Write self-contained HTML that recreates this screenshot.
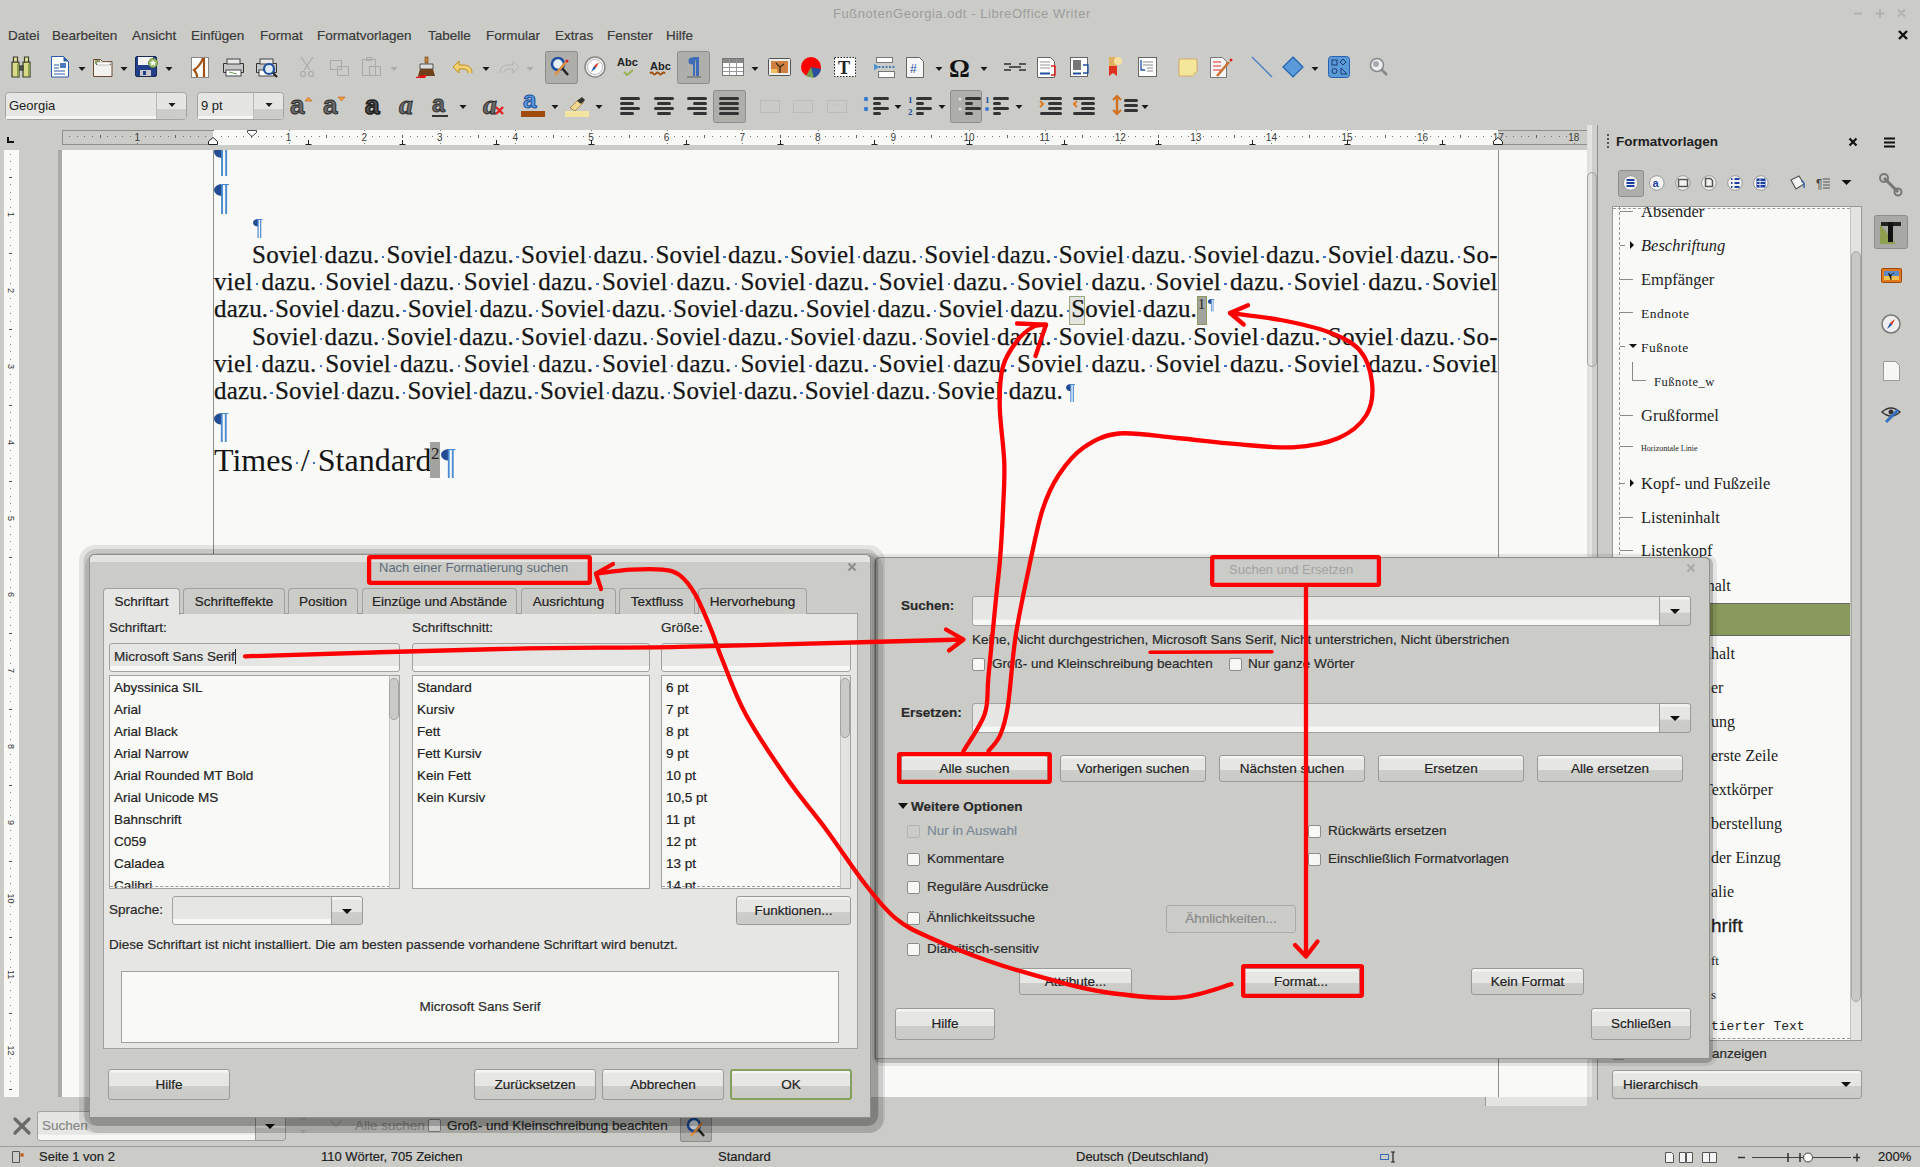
<!DOCTYPE html>
<html><head><meta charset="utf-8">
<style>
*{box-sizing:border-box;margin:0;padding:0}
html,body{width:1920px;height:1167px;overflow:hidden;background:#cbccc8;font-family:"Liberation Sans",sans-serif;font-size:13px;color:#2f2f2f;position:relative}
.a{position:absolute}
.t{position:absolute;white-space:nowrap;line-height:1}
.menu span{position:absolute;top:29px;font-size:13.5px;color:#3a3a3a;white-space:nowrap;line-height:1}
.ln{position:absolute;left:214px;width:1284px;text-align:justify;text-align-last:justify;font-family:"Liberation Serif",serif;font-size:25px;color:#151515;white-space:normal;line-height:27px;height:27px;letter-spacing:.3px;-webkit-text-stroke:.25px #151515}
.d{position:relative}.d:after{content:"";position:absolute;left:50%;top:55%;width:2.4px;height:2.4px;margin-left:-1.2px;background:#3a74c4}
.pil{color:#3b6db4;font-family:"Liberation Sans",sans-serif}
.dlg{position:absolute;background:#cbccc8;border:1px solid #8f908c;border-radius:6px 6px 0 0}
.btn{position:absolute;height:29px;border:1px solid #9a9b97;border-radius:3px;background:linear-gradient(#f4f5f2 0,#f4f5f2 2px,#e6e7e4 3px,#e6e7e4 55%,#cdcecA 56%,#cacbc7 100%);font-size:13.5px;color:#222;text-align:center;line-height:27px;white-space:nowrap}
.inp{position:absolute;border:1px solid #a2a39f;border-radius:3px;background:linear-gradient(#e5e6e3 0,#e6e7e4 80%,#f7f8f6 81%)}
.list{position:absolute;background:#f9faf8;border:1px solid #a2a39f;overflow:hidden}
.list div{position:absolute;left:4px;font-size:13.5px;color:#222;white-space:nowrap;line-height:1}
.cb{position:absolute;width:13px;height:13px;border:1px solid #8c8d89;border-radius:2px;background:#f7f8f6}
.lbl{position:absolute;font-size:13.5px;color:#2a2a2a;white-space:nowrap;line-height:1}
.tab{position:absolute;top:588px;height:26px;border:1px solid #a0a19d;border-bottom:none;border-radius:4px 4px 0 0;background:#cbccc8;font-size:13.5px;color:#222;text-align:center;line-height:26px;white-space:nowrap}
.sty{position:absolute;font-family:"Liberation Serif",serif;color:#222;white-space:nowrap;line-height:1}
.lbl,.btn,.list div,.tab,.menu span{-webkit-text-stroke:.2px currentColor}
</style></head><body>
<!-- chrome -->
<div class="t" style="left:833px;top:7px;font-size:13px;color:#9d9d9d;letter-spacing:.55px">FußnotenGeorgia.odt - LibreOffice Writer</div>
<svg class="a" style="left:1850px;top:6px" width="60" height="14"><path d="M4 7.5H12M30 3V12M25.5 7.5H34.5M48 3.5L55 10.5M55 3.5L48 10.5" stroke="#b2b2b0" stroke-width="2" fill="none"/></svg>
<div class="menu">
<span style="left:8px">Datei</span><span style="left:52px">Bearbeiten</span><span style="left:132px">Ansicht</span><span style="left:191px">Einfügen</span><span style="left:260px">Format</span><span style="left:317px">Formatvorlagen</span><span style="left:428px">Tabelle</span><span style="left:486px">Formular</span><span style="left:555px">Extras</span><span style="left:607px">Fenster</span><span style="left:666px">Hilfe</span>
</div>
<svg class="a" style="left:1897px;top:29px" width="12" height="12"><path d="M2 2L10 10M10 2L2 10" stroke="#111" stroke-width="2.4"/></svg>

<!-- toolbars -->
<svg class="a" style="left:0;top:0" width="1420" height="126"><rect x="545.5" y="51.5" width="32" height="32" rx="2" fill="#aeafab" stroke="#8d8e8a"/><rect x="677.5" y="51.5" width="32" height="32" rx="2" fill="#aeafab" stroke="#8d8e8a"/><g stroke="#3b3b2a" stroke-width="1.2"><path d="M12 62h7v15h-7z M23 62h7v15h-7z" fill="#d9d98a"/><path d="M13.5 57h4v5h-4z M24.5 57h4v5h-4z" fill="#e8e8a0"/><rect x="19" y="66" width="4" height="4" fill="#555"/></g><path d="M17 64h2v12h-2z M28 64h2v12h-2z" fill="#8aa050"/><path d="M51.5 56.5h12l5 5v15.5h-17z" fill="#fff" stroke="#2c5aa8"/><path d="M63.5 56.5v5h5z" fill="#2c5aa8"/><path d="M54 65h5M54 68h5M54 71h11M54 74h11" stroke="#2c5aa8" stroke-width="1.2"/><rect x="60" y="63" width="6" height="5" fill="#4a7ac0"/><path d="M78.5 67H85.5L82 71Z" fill="#1a1a1a"/><path d="M93.5 59.5h7l2 2h9.5v15h-18.5z" fill="#f2f2ee" stroke="#6b4a30"/><rect x="95" y="60" width="5" height="4" fill="#8aa060"/><path d="M96 64.5h15" stroke="#6b4a30"/><rect x="97" y="62" width="13" height="3" fill="#fff" stroke="#999" stroke-width=".6"/><path d="M120.5 67H127.5L124 71Z" fill="#1a1a1a"/><rect x="135.5" y="56.5" width="21" height="20" rx="1.5" fill="#22408a" stroke="#1a2a50"/><rect x="138" y="57" width="15" height="8" fill="#f4f4f4"/><rect x="140" y="70" width="11" height="6" fill="#c8c8c8"/><rect x="143" y="71" width="3" height="4" fill="#22408a"/><circle cx="153" cy="63" r="4.5" fill="#9cc070" stroke="#6a8a40"/><path d="M153 60l1 2h2l-1.5 1.5.6 2.2-2.1-1.2-2.1 1.2.6-2.2L150 62h2z" fill="#fff"/><path d="M165.5 67H172.5L169 71Z" fill="#1a1a1a"/><rect x="191.5" y="57.5" width="17" height="20" fill="#fff" stroke="#888"/><path d="M203 58c-2 6-6 10-9 12 2 2 3 4 3 7M204 58v19" stroke="#a0500f" stroke-width="2.2" fill="none"/><path d="M223.5 63.5h20v9h-20z" fill="#c7c7c7" stroke="#333"/><rect x="227" y="59" width="13" height="5" fill="#e8e8e8" stroke="#444"/><rect x="226" y="70" width="15" height="6" fill="#fff" stroke="#444"/><path d="M229 72l8 2" stroke="#6a9a5a"/><path d="M256.5 63.5h20v9h-20z" fill="#c7c7c7" stroke="#333"/><rect x="260" y="59" width="13" height="5" fill="#e8e8e8" stroke="#444"/><rect x="259" y="70" width="15" height="6" fill="#fff" stroke="#444"/><circle cx="269" cy="69" r="5" fill="#dfeaf5" stroke="#1f4fa0" stroke-width="2.2"/><path d="M273 73l4 4" stroke="#222" stroke-width="2.2"/><g stroke="#aaa" stroke-width="1.2" fill="none"><path d="M301 57l9 13M313 57l-9 13"/><circle cx="303" cy="74" r="2.5"/><circle cx="311" cy="74" r="2.5"/></g><g stroke="#aaa" fill="none"><rect x="330.5" y="60.5" width="11" height="9"/><rect x="337.5" y="66.5" width="11" height="9"/></g><g stroke="#aaa" fill="none"><rect x="362.5" y="59.5" width="13" height="16"/><rect x="366.5" y="57.5" width="5" height="3"/><rect x="369.5" y="66.5" width="11" height="9"/></g><path d="M390.5 67H397.5L394 71Z" fill="#aaa"/><rect x="425" y="57" width="3" height="6" fill="#c88030" stroke="#704010" stroke-width=".6"/><path d="M420 64h13v5h-13z" fill="#ddd" stroke="#333" stroke-width=".8"/><path d="M420 69h13l2 7h-17z" fill="#704018"/><path d="M416 77l8-2h3l-2 3h-9z" fill="#e01010"/><path d="M472 73c0-6-4-8-9-8h-4v-4l-6 6 6 6v-4h4c3 0 5 1 5 4" fill="#f0d070" stroke="#c09020" stroke-width="1"/><path d="M482.5 67H489.5L486 71Z" fill="#1a1a1a"/><path d="M500 73c0-6 4-8 9-8h4v-4l6 6-6 6v-4h-4c-3 0-5 1-5 4" fill="none" stroke="#b3b3b3" stroke-width="1"/><path d="M526.5 67H533.5L530 71Z" fill="#aaa"/><circle cx="558" cy="64" r="6" fill="#e6eef6" stroke="#1f4fa0" stroke-width="2.5"/><path d="M562 68l6 7" stroke="#222" stroke-width="2.5"/><path d="M555 75l11-13" stroke="#e09040" stroke-width="2.5"/><circle cx="567" cy="61" r="1.5" fill="#e02020"/><circle cx="595" cy="67" r="10" fill="#f4f4f4" stroke="#888" stroke-width="1.5"/><circle cx="595" cy="67" r="7.5" fill="#fff" stroke="#bbb"/><path d="M599 62l-3 6-2-2z" fill="#e03020"/><path d="M591 72l3-6 2 2z" fill="#2050a0"/><text x="617" y="66" font-family="Liberation Sans" font-weight="bold" font-size="11" fill="#222">Abc</text><path d="M624 72l3 3 6-5" stroke="#9ab050" stroke-width="2" fill="none"/><text x="650" y="70" font-family="Liberation Sans" font-weight="bold" font-size="11" fill="#222">Abc</text><path d="M650 73.5q1.5-2 3 0t3 0 3 0 3 0 3 0" stroke="#a05010" stroke-width="2" fill="none"/><path d="M693 57h6v20h-3v-17h-1v17h-2z" fill="#3d6db8"/><circle cx="692" cy="61" r="3.5" fill="#3d6db8"/><rect x="687" y="76" width="14" height="2" fill="#888"/><g><rect x="722.5" y="58.5" width="21" height="17" fill="#fff" stroke="#777"/><rect x="723" y="59" width="20" height="4" fill="#888"/><path d="M723 67.5h20M723 71.5h20M729.5 59v16M736.5 59v16" stroke="#999"/></g><path d="M751.5 67H758.5L755 71Z" fill="#1a1a1a"/><rect x="768.5" y="58.5" width="22" height="17" rx="1" fill="#eee" stroke="#555"/><rect x="771" y="61" width="17" height="12" fill="#d08040"/><path d="M780 73v-6l-4-4M780 67l4-3" stroke="#3a2a10" stroke-width="1.3" fill="none"/><rect x="771" y="69" width="6" height="4" fill="#f0c060"/><circle cx="811" cy="67" r="10" fill="#f00"/><path d="M811 67l10 2c-1 5-4 8-8 9z" fill="#2a50a0"/><path d="M806 76l5-9 3 11z" fill="#70a050"/><rect x="834.5" y="57.5" width="21" height="19" fill="#fff" stroke="#222" stroke-dasharray="1.5 1.5"/><text x="838" y="74" font-family="Liberation Serif" font-weight="bold" font-size="18" fill="#222">T</text><rect x="876.5" y="57.5" width="16" height="5" fill="#fff" stroke="#777"/><rect x="878.5" y="71.5" width="16" height="6" fill="#fff" stroke="#777"/><path d="M875 67h20" stroke="#2060b0" stroke-dasharray="2 1.5" stroke-width="1.5"/><path d="M874 63.5v7l5-3.5z" fill="#4a90d0"/><path d="M906.5 57.5h13l4 4v16h-17z" fill="#f6f6f6" stroke="#666"/><text x="910" y="73" font-family="Liberation Sans" font-size="12" fill="#2050a0">#</text><path d="M935.5 67H942.5L939 71Z" fill="#1a1a1a"/><text x="949" y="77" font-family="Liberation Serif" font-weight="bold" font-size="26" fill="#111">Ω</text><path d="M980.5 67H987.5L984 71Z" fill="#1a1a1a"/><path d="M1004 64h7M1004 70h7M1019 64h7M1019 70h7M1009 67h12" stroke="#555" stroke-width="2"/><path d="M1037.5 57.5h13l4 4v16h-17z" fill="#fff" stroke="#666"/><path d="M1040 62h10M1040 65h10M1040 68h10" stroke="#999"/><path d="M1040 73.5h10" stroke="#2050a0" stroke-width="2"/><path d="M1051 66h4v9h-4" stroke="#e02020" stroke-width="1.5" fill="none"/><rect x="1070.5" y="57.5" width="17" height="19" fill="#fff" stroke="#666"/><rect x="1073" y="60" width="8" height="10" fill="#777"/><path d="M1073 73.5h8" stroke="#2050a0" stroke-width="2"/><path d="M1083 65h5v8h-5" stroke="#2050a0" stroke-width="1.3" fill="none"/><path d="M1109 57h8v19l-4-3-4 3z" fill="#e03020"/><rect x="1109" y="57" width="8" height="9" fill="#e0b060"/><circle cx="1118" cy="61" r="4" fill="#f6e0a0"/><rect x="1138.5" y="57.5" width="18" height="19" fill="#fff" stroke="#666"/><path d="M1143 62h10M1143 65h10M1147 68h6M1147 71h6" stroke="#888"/><path d="M1141 60v10h4" stroke="#2050a0" stroke-width="1.3" fill="none"/><path d="M1179 59h18v13l-4 4h-14z" fill="#f4e69a" stroke="#d0a060" stroke-width=".8"/><path d="M1193 76v-4h4" fill="#e0d080"/><path d="M1210.5 57.5h12l4 4v16h-16z" fill="#f4f4f4" stroke="#777"/><path d="M1213 62h8M1213 66h8M1213 70h8" stroke="#e03030" stroke-width="1.2"/><path d="M1217 76l12-14" stroke="#c87030" stroke-width="2.5"/><circle cx="1231" cy="60" r="1.5" fill="#e02020"/><path d="M1252 57l20 20" stroke="#4a80c8" stroke-width="1.5"/><path d="M1293 57l10 10-10 10-10-10z" fill="#5b9ad8" stroke="#2060b0" stroke-width="1.2"/><path d="M1311.5 67H1318.5L1315 71Z" fill="#1a1a1a"/><rect x="1328.5" y="56.5" width="21" height="21" rx="3" fill="#5b9ad8" stroke="#2a60b0"/><g stroke="#1a3a6a" fill="none" stroke-width="1"><rect x="1332" y="60" width="5" height="5"/><path d="M1343 59l3 3-3 3-3-3z"/><circle cx="1334.5" cy="71" r="2.5"/><path d="M1341 74h6l-6-6z"/></g><circle cx="1377" cy="65" r="6.5" fill="#e8eef4" stroke="#888" stroke-width="1.5"/><circle cx="1376" cy="64" r="3" fill="#aaa"/><path d="M1381 69l6 6" stroke="#888" stroke-width="2.5"/><rect x="713.5" y="90.5" width="32" height="32" rx="2" fill="#aeafab" stroke="#8d8e8a"/><rect x="950.5" y="90.5" width="31" height="32" rx="2" fill="#aeafab" stroke="#8d8e8a"/><rect x="5.5" y="92.5" width="181" height="27" rx="3" fill="#e5e6e3" stroke="#a2a39f"/><rect x="6" y="116" width="150" height="3" fill="#f6f7f5"/><path d="M156.5 93v26" stroke="#b8b9b5"/><rect x="157" y="109" width="29" height="10" fill="#cccdc9"/><path d="M168.5 103H175.5L172 107Z" fill="#1a1a1a"/><rect x="197.5" y="92.5" width="86" height="27" rx="3" fill="#e5e6e3" stroke="#a2a39f"/><rect x="198" y="116" width="55" height="3" fill="#f6f7f5"/><path d="M253.5 93v26" stroke="#b8b9b5"/><rect x="254" y="109" width="29" height="10" fill="#cccdc9"/><path d="M265.5 103H272.5L269 107Z" fill="#1a1a1a"/><text x="290" y="114" font-family="Liberation Sans" font-weight="bold" font-size="26" fill="#6a6a6a" stroke="#2a2a2a" stroke-width=".9">a</text><path d="M305 101l3.5-4 3.5 4z" fill="#f0a040" stroke="#c06010" stroke-width=".6"/><text x="323" y="114" font-family="Liberation Sans" font-weight="bold" font-size="26" fill="#6a6a6a" stroke="#2a2a2a" stroke-width=".9">a</text><path d="M338 97l3.5 4 3.5-4z" fill="#f0a040" stroke="#c06010" stroke-width=".6"/><text x="365" y="114" font-family="Liberation Sans" font-weight="bold" font-size="26" fill="#555" stroke="#222" stroke-width="1.6">a</text><text x="399" y="114" font-family="Liberation Serif" font-style="italic" font-weight="bold" font-size="28" fill="#6a6a6a" stroke="#2a2a2a" stroke-width=".9">a</text><text x="432" y="112" font-family="Liberation Sans" font-weight="bold" font-size="23" fill="#6a6a6a" stroke="#2a2a2a" stroke-width=".9">a</text><rect x="432" y="115" width="16" height="2" fill="#333"/><path d="M459.5 105H466.5L463 109Z" fill="#1a1a1a"/><text x="483" y="114" font-family="Liberation Serif" font-style="italic" font-weight="bold" font-size="28" fill="#6a6a6a" stroke="#2a2a2a" stroke-width=".9">a</text><path d="M496 107l7 7M503 107l-7 7" stroke="#e02020" stroke-width="2.4"/><text x="523" y="108" font-family="Liberation Sans" font-weight="bold" font-size="24" fill="#5b9ae0" stroke="#2050a0" stroke-width="1">a</text><rect x="521" y="111" width="24" height="6" fill="#a04a10"/><path d="M551.5 105H558.5L555 109Z" fill="#1a1a1a"/><path d="M570 108l9-9 5 3-9 9z" fill="#f0d890" stroke="#a08040" stroke-width=".8"/><path d="M577 101l5-4 3 3-4 4z" fill="#333"/><rect x="565" y="111" width="24" height="6" fill="#f4e4a0"/><path d="M595.5 105H602.5L599 109Z" fill="#1a1a1a"/><rect x="620" y="97" width="20" height="3" rx="1.5" fill="#333"/><rect x="620" y="102" width="14" height="3" rx="1.5" fill="#333"/><rect x="620" y="107" width="20" height="3" rx="1.5" fill="#333"/><rect x="620" y="112" width="14" height="3" rx="1.5" fill="#333"/><rect x="654.0" y="97" width="20" height="3" rx="1.5" fill="#333"/><rect x="657.0" y="102" width="14" height="3" rx="1.5" fill="#333"/><rect x="654.0" y="107" width="20" height="3" rx="1.5" fill="#333"/><rect x="657.0" y="112" width="14" height="3" rx="1.5" fill="#333"/><rect x="687" y="97" width="20" height="3" rx="1.5" fill="#333"/><rect x="693" y="102" width="14" height="3" rx="1.5" fill="#333"/><rect x="687" y="107" width="20" height="3" rx="1.5" fill="#333"/><rect x="693" y="112" width="14" height="3" rx="1.5" fill="#333"/><rect x="719" y="97" width="20" height="3" rx="1.5" fill="#333"/><rect x="719" y="102" width="20" height="3" rx="1.5" fill="#333"/><rect x="719" y="107" width="20" height="3" rx="1.5" fill="#333"/><rect x="719" y="112" width="20" height="3" rx="1.5" fill="#333"/><rect x="760.5" y="100.5" width="19" height="12" fill="none" stroke="#bcbcba"/><path d="M764 104h8" stroke="#c4c4c2"/><rect x="793.5" y="100.5" width="19" height="12" fill="none" stroke="#bcbcba"/><path d="M797 104h8" stroke="#c4c4c2"/><rect x="827.5" y="100.5" width="19" height="12" fill="none" stroke="#bcbcba"/><path d="M831 104h8" stroke="#c4c4c2"/><rect x="873" y="97" width="16" height="3" rx="1.5" fill="#333"/><rect x="873" y="102" width="8" height="3" rx="1.5" fill="#333"/><rect x="873" y="107" width="16" height="3" rx="1.5" fill="#333"/><rect x="873" y="112" width="8" height="3" rx="1.5" fill="#333"/><circle cx="866" cy="99" r="2.2" fill="#3a7ad0"/><circle cx="866" cy="109" r="2.2" fill="#3a7ad0"/><path d="M894.5 105H901.5L898 109Z" fill="#1a1a1a"/><rect x="916" y="97" width="16" height="3" rx="1.5" fill="#333"/><rect x="916" y="102" width="8" height="3" rx="1.5" fill="#333"/><rect x="916" y="107" width="16" height="3" rx="1.5" fill="#333"/><rect x="916" y="112" width="8" height="3" rx="1.5" fill="#333"/><text x="908" y="103" font-family="Liberation Serif" font-weight="bold" font-size="9" fill="#2050a0">1</text><text x="908" y="115" font-family="Liberation Serif" font-weight="bold" font-size="9" fill="#2050a0">2</text><path d="M938.5 105H945.5L942 109Z" fill="#1a1a1a"/><rect x="965" y="97" width="16" height="3" rx="1.5" fill="#333"/><rect x="965" y="102" width="8" height="3" rx="1.5" fill="#333"/><rect x="965" y="107" width="16" height="3" rx="1.5" fill="#333"/><rect x="965" y="112" width="8" height="3" rx="1.5" fill="#333"/><circle cx="960" cy="99" r="1.5" fill="#ddd"/><circle cx="960" cy="109" r="1.5" fill="#ddd"/><rect x="993" y="97" width="16" height="3" rx="1.5" fill="#333"/><rect x="993" y="102" width="8" height="3" rx="1.5" fill="#333"/><rect x="993" y="107" width="16" height="3" rx="1.5" fill="#333"/><rect x="993" y="112" width="8" height="3" rx="1.5" fill="#333"/><text x="985" y="103" font-family="Liberation Serif" font-weight="bold" font-size="9" fill="#2050a0">1</text><circle cx="987" cy="109" r="2" fill="#3a7ad0"/><path d="M1015.5 105H1022.5L1019 109Z" fill="#1a1a1a"/><rect x="1040" y="97" width="22" height="3" rx="1.5" fill="#333"/><rect x="1048" y="102" width="14" height="3" rx="1.5" fill="#333"/><rect x="1048" y="107" width="14" height="3" rx="1.5" fill="#333"/><rect x="1040" y="112" width="22" height="3" rx="1.5" fill="#333"/><path d="M1040 101l3 3-3 3" stroke="#e07a20" stroke-width="2" fill="none"/><rect x="1073" y="97" width="22" height="3" rx="1.5" fill="#333"/><rect x="1081" y="102" width="14" height="3" rx="1.5" fill="#333"/><rect x="1081" y="107" width="14" height="3" rx="1.5" fill="#333"/><rect x="1073" y="112" width="22" height="3" rx="1.5" fill="#333"/><path d="M1077 101l-3 3 3 3" stroke="#e07a20" stroke-width="2" fill="none"/><path d="M1117 96v18" stroke="#d07020" stroke-width="2.5"/><path d="M1113 100l4-4 4 4M1113 110l4 4 4-4" stroke="#d07020" stroke-width="2" fill="none"/><rect x="1124" y="99" width="14" height="3" rx="1.5" fill="#333"/><rect x="1124" y="104" width="14" height="3" rx="1.5" fill="#333"/><rect x="1124" y="109" width="14" height="3" rx="1.5" fill="#333"/><path d="M1141.5 105H1148.5L1145 109Z" fill="#1a1a1a"/></svg><div class="t" style="left:9px;top:99px;font-size:13px;color:#222">Georgia</div><div class="t" style="left:201px;top:99px;font-size:13px;color:#222">9 pt</div>
<!-- ruler -->
<div class="a" style="left:62px;top:130px;width:152px;height:15px;background:#cbccc8;border:1px solid #8e8f8b;border-right:none"></div>
<div class="a" style="left:1498px;top:130px;width:89px;height:15px;background:#cbccc8;border:1px solid #8e8f8b;border-left:none;border-right:none"></div>
<div class="a" style="left:213px;top:130px;width:1285px;height:15px;background:#f9faf8"></div>
<div class="t" style="left:278.6px;top:133px;width:20px;text-align:center;font-size:10px;color:#3a3a3a">1</div>
<div class="t" style="left:354.2px;top:133px;width:20px;text-align:center;font-size:10px;color:#3a3a3a">2</div>
<div class="t" style="left:429.8px;top:133px;width:20px;text-align:center;font-size:10px;color:#3a3a3a">3</div>
<div class="t" style="left:505.4px;top:133px;width:20px;text-align:center;font-size:10px;color:#3a3a3a">4</div>
<div class="t" style="left:581.0px;top:133px;width:20px;text-align:center;font-size:10px;color:#3a3a3a">5</div>
<div class="t" style="left:656.6px;top:133px;width:20px;text-align:center;font-size:10px;color:#3a3a3a">6</div>
<div class="t" style="left:732.2px;top:133px;width:20px;text-align:center;font-size:10px;color:#3a3a3a">7</div>
<div class="t" style="left:807.8px;top:133px;width:20px;text-align:center;font-size:10px;color:#3a3a3a">8</div>
<div class="t" style="left:883.4px;top:133px;width:20px;text-align:center;font-size:10px;color:#3a3a3a">9</div>
<div class="t" style="left:959.0px;top:133px;width:20px;text-align:center;font-size:10px;color:#3a3a3a">10</div>
<div class="t" style="left:1034.6px;top:133px;width:20px;text-align:center;font-size:10px;color:#3a3a3a">11</div>
<div class="t" style="left:1110.2px;top:133px;width:20px;text-align:center;font-size:10px;color:#3a3a3a">12</div>
<div class="t" style="left:1185.8px;top:133px;width:20px;text-align:center;font-size:10px;color:#3a3a3a">13</div>
<div class="t" style="left:1261.4px;top:133px;width:20px;text-align:center;font-size:10px;color:#3a3a3a">14</div>
<div class="t" style="left:1337.0px;top:133px;width:20px;text-align:center;font-size:10px;color:#3a3a3a">15</div>
<div class="t" style="left:1412.6px;top:133px;width:20px;text-align:center;font-size:10px;color:#3a3a3a">16</div>
<div class="t" style="left:1488.2px;top:133px;width:20px;text-align:center;font-size:10px;color:#3a3a3a">17</div>
<div class="t" style="left:1563.8px;top:133px;width:20px;text-align:center;font-size:10px;color:#3a3a3a">18</div>
<div class="t" style="left:127.4px;top:133px;width:20px;text-align:center;font-size:10px;color:#3a3a3a">1</div>
<svg class="a" style="left:0;top:0" width="1920" height="150"><rect x="69" y="136" width="1" height="1" fill="#777"/><rect x="77" y="136" width="1" height="1" fill="#777"/><rect x="84" y="136" width="1" height="1" fill="#777"/><rect x="92" y="136" width="1" height="1" fill="#777"/><rect x="100" y="135" width="1" height="3" fill="#666"/><rect x="107" y="136" width="1" height="1" fill="#777"/><rect x="115" y="136" width="1" height="1" fill="#777"/><rect x="122" y="136" width="1" height="1" fill="#777"/><rect x="130" y="136" width="1" height="1" fill="#777"/><rect x="137" y="130" width="1" height="1" fill="#777"/><rect x="137" y="143" width="1" height="1" fill="#777"/><rect x="145" y="136" width="1" height="1" fill="#777"/><rect x="153" y="136" width="1" height="1" fill="#777"/><rect x="160" y="136" width="1" height="1" fill="#777"/><rect x="168" y="136" width="1" height="1" fill="#777"/><rect x="175" y="135" width="1" height="3" fill="#666"/><rect x="183" y="136" width="1" height="1" fill="#777"/><rect x="190" y="136" width="1" height="1" fill="#777"/><rect x="198" y="136" width="1" height="1" fill="#777"/><rect x="205" y="136" width="1" height="1" fill="#777"/><rect x="213" y="130" width="1" height="1" fill="#777"/><rect x="213" y="143" width="1" height="1" fill="#777"/><rect x="221" y="136" width="1" height="1" fill="#777"/><rect x="228" y="136" width="1" height="1" fill="#777"/><rect x="236" y="136" width="1" height="1" fill="#777"/><rect x="243" y="136" width="1" height="1" fill="#777"/><rect x="251" y="135" width="1" height="3" fill="#666"/><rect x="258" y="136" width="1" height="1" fill="#777"/><rect x="266" y="136" width="1" height="1" fill="#777"/><rect x="273" y="136" width="1" height="1" fill="#777"/><rect x="281" y="136" width="1" height="1" fill="#777"/><rect x="289" y="130" width="1" height="1" fill="#777"/><rect x="289" y="143" width="1" height="1" fill="#777"/><rect x="296" y="136" width="1" height="1" fill="#777"/><rect x="304" y="136" width="1" height="1" fill="#777"/><rect x="311" y="136" width="1" height="1" fill="#777"/><rect x="319" y="136" width="1" height="1" fill="#777"/><rect x="326" y="135" width="1" height="3" fill="#666"/><rect x="334" y="136" width="1" height="1" fill="#777"/><rect x="342" y="136" width="1" height="1" fill="#777"/><rect x="349" y="136" width="1" height="1" fill="#777"/><rect x="357" y="136" width="1" height="1" fill="#777"/><rect x="364" y="130" width="1" height="1" fill="#777"/><rect x="364" y="143" width="1" height="1" fill="#777"/><rect x="372" y="136" width="1" height="1" fill="#777"/><rect x="379" y="136" width="1" height="1" fill="#777"/><rect x="387" y="136" width="1" height="1" fill="#777"/><rect x="394" y="136" width="1" height="1" fill="#777"/><rect x="402" y="135" width="1" height="3" fill="#666"/><rect x="410" y="136" width="1" height="1" fill="#777"/><rect x="417" y="136" width="1" height="1" fill="#777"/><rect x="425" y="136" width="1" height="1" fill="#777"/><rect x="432" y="136" width="1" height="1" fill="#777"/><rect x="440" y="130" width="1" height="1" fill="#777"/><rect x="440" y="143" width="1" height="1" fill="#777"/><rect x="447" y="136" width="1" height="1" fill="#777"/><rect x="455" y="136" width="1" height="1" fill="#777"/><rect x="462" y="136" width="1" height="1" fill="#777"/><rect x="470" y="136" width="1" height="1" fill="#777"/><rect x="478" y="135" width="1" height="3" fill="#666"/><rect x="485" y="136" width="1" height="1" fill="#777"/><rect x="493" y="136" width="1" height="1" fill="#777"/><rect x="500" y="136" width="1" height="1" fill="#777"/><rect x="508" y="136" width="1" height="1" fill="#777"/><rect x="515" y="130" width="1" height="1" fill="#777"/><rect x="515" y="143" width="1" height="1" fill="#777"/><rect x="523" y="136" width="1" height="1" fill="#777"/><rect x="531" y="136" width="1" height="1" fill="#777"/><rect x="538" y="136" width="1" height="1" fill="#777"/><rect x="546" y="136" width="1" height="1" fill="#777"/><rect x="553" y="135" width="1" height="3" fill="#666"/><rect x="561" y="136" width="1" height="1" fill="#777"/><rect x="568" y="136" width="1" height="1" fill="#777"/><rect x="576" y="136" width="1" height="1" fill="#777"/><rect x="583" y="136" width="1" height="1" fill="#777"/><rect x="591" y="130" width="1" height="1" fill="#777"/><rect x="591" y="143" width="1" height="1" fill="#777"/><rect x="599" y="136" width="1" height="1" fill="#777"/><rect x="606" y="136" width="1" height="1" fill="#777"/><rect x="614" y="136" width="1" height="1" fill="#777"/><rect x="621" y="136" width="1" height="1" fill="#777"/><rect x="629" y="135" width="1" height="3" fill="#666"/><rect x="636" y="136" width="1" height="1" fill="#777"/><rect x="644" y="136" width="1" height="1" fill="#777"/><rect x="651" y="136" width="1" height="1" fill="#777"/><rect x="659" y="136" width="1" height="1" fill="#777"/><rect x="667" y="130" width="1" height="1" fill="#777"/><rect x="667" y="143" width="1" height="1" fill="#777"/><rect x="674" y="136" width="1" height="1" fill="#777"/><rect x="682" y="136" width="1" height="1" fill="#777"/><rect x="689" y="136" width="1" height="1" fill="#777"/><rect x="697" y="136" width="1" height="1" fill="#777"/><rect x="704" y="135" width="1" height="3" fill="#666"/><rect x="712" y="136" width="1" height="1" fill="#777"/><rect x="720" y="136" width="1" height="1" fill="#777"/><rect x="727" y="136" width="1" height="1" fill="#777"/><rect x="735" y="136" width="1" height="1" fill="#777"/><rect x="742" y="130" width="1" height="1" fill="#777"/><rect x="742" y="143" width="1" height="1" fill="#777"/><rect x="750" y="136" width="1" height="1" fill="#777"/><rect x="757" y="136" width="1" height="1" fill="#777"/><rect x="765" y="136" width="1" height="1" fill="#777"/><rect x="772" y="136" width="1" height="1" fill="#777"/><rect x="780" y="135" width="1" height="3" fill="#666"/><rect x="788" y="136" width="1" height="1" fill="#777"/><rect x="795" y="136" width="1" height="1" fill="#777"/><rect x="803" y="136" width="1" height="1" fill="#777"/><rect x="810" y="136" width="1" height="1" fill="#777"/><rect x="818" y="130" width="1" height="1" fill="#777"/><rect x="818" y="143" width="1" height="1" fill="#777"/><rect x="825" y="136" width="1" height="1" fill="#777"/><rect x="833" y="136" width="1" height="1" fill="#777"/><rect x="840" y="136" width="1" height="1" fill="#777"/><rect x="848" y="136" width="1" height="1" fill="#777"/><rect x="856" y="135" width="1" height="3" fill="#666"/><rect x="863" y="136" width="1" height="1" fill="#777"/><rect x="871" y="136" width="1" height="1" fill="#777"/><rect x="878" y="136" width="1" height="1" fill="#777"/><rect x="886" y="136" width="1" height="1" fill="#777"/><rect x="893" y="130" width="1" height="1" fill="#777"/><rect x="893" y="143" width="1" height="1" fill="#777"/><rect x="901" y="136" width="1" height="1" fill="#777"/><rect x="909" y="136" width="1" height="1" fill="#777"/><rect x="916" y="136" width="1" height="1" fill="#777"/><rect x="924" y="136" width="1" height="1" fill="#777"/><rect x="931" y="135" width="1" height="3" fill="#666"/><rect x="939" y="136" width="1" height="1" fill="#777"/><rect x="946" y="136" width="1" height="1" fill="#777"/><rect x="954" y="136" width="1" height="1" fill="#777"/><rect x="961" y="136" width="1" height="1" fill="#777"/><rect x="969" y="130" width="1" height="1" fill="#777"/><rect x="969" y="143" width="1" height="1" fill="#777"/><rect x="977" y="136" width="1" height="1" fill="#777"/><rect x="984" y="136" width="1" height="1" fill="#777"/><rect x="992" y="136" width="1" height="1" fill="#777"/><rect x="999" y="136" width="1" height="1" fill="#777"/><rect x="1007" y="135" width="1" height="3" fill="#666"/><rect x="1014" y="136" width="1" height="1" fill="#777"/><rect x="1022" y="136" width="1" height="1" fill="#777"/><rect x="1029" y="136" width="1" height="1" fill="#777"/><rect x="1037" y="136" width="1" height="1" fill="#777"/><rect x="1045" y="130" width="1" height="1" fill="#777"/><rect x="1045" y="143" width="1" height="1" fill="#777"/><rect x="1052" y="136" width="1" height="1" fill="#777"/><rect x="1060" y="136" width="1" height="1" fill="#777"/><rect x="1067" y="136" width="1" height="1" fill="#777"/><rect x="1075" y="136" width="1" height="1" fill="#777"/><rect x="1082" y="135" width="1" height="3" fill="#666"/><rect x="1090" y="136" width="1" height="1" fill="#777"/><rect x="1098" y="136" width="1" height="1" fill="#777"/><rect x="1105" y="136" width="1" height="1" fill="#777"/><rect x="1113" y="136" width="1" height="1" fill="#777"/><rect x="1120" y="130" width="1" height="1" fill="#777"/><rect x="1120" y="143" width="1" height="1" fill="#777"/><rect x="1128" y="136" width="1" height="1" fill="#777"/><rect x="1135" y="136" width="1" height="1" fill="#777"/><rect x="1143" y="136" width="1" height="1" fill="#777"/><rect x="1150" y="136" width="1" height="1" fill="#777"/><rect x="1158" y="135" width="1" height="3" fill="#666"/><rect x="1166" y="136" width="1" height="1" fill="#777"/><rect x="1173" y="136" width="1" height="1" fill="#777"/><rect x="1181" y="136" width="1" height="1" fill="#777"/><rect x="1188" y="136" width="1" height="1" fill="#777"/><rect x="1196" y="130" width="1" height="1" fill="#777"/><rect x="1196" y="143" width="1" height="1" fill="#777"/><rect x="1203" y="136" width="1" height="1" fill="#777"/><rect x="1211" y="136" width="1" height="1" fill="#777"/><rect x="1218" y="136" width="1" height="1" fill="#777"/><rect x="1226" y="136" width="1" height="1" fill="#777"/><rect x="1234" y="135" width="1" height="3" fill="#666"/><rect x="1241" y="136" width="1" height="1" fill="#777"/><rect x="1249" y="136" width="1" height="1" fill="#777"/><rect x="1256" y="136" width="1" height="1" fill="#777"/><rect x="1264" y="136" width="1" height="1" fill="#777"/><rect x="1271" y="130" width="1" height="1" fill="#777"/><rect x="1271" y="143" width="1" height="1" fill="#777"/><rect x="1279" y="136" width="1" height="1" fill="#777"/><rect x="1287" y="136" width="1" height="1" fill="#777"/><rect x="1294" y="136" width="1" height="1" fill="#777"/><rect x="1302" y="136" width="1" height="1" fill="#777"/><rect x="1309" y="135" width="1" height="3" fill="#666"/><rect x="1317" y="136" width="1" height="1" fill="#777"/><rect x="1324" y="136" width="1" height="1" fill="#777"/><rect x="1332" y="136" width="1" height="1" fill="#777"/><rect x="1339" y="136" width="1" height="1" fill="#777"/><rect x="1347" y="130" width="1" height="1" fill="#777"/><rect x="1347" y="143" width="1" height="1" fill="#777"/><rect x="1355" y="136" width="1" height="1" fill="#777"/><rect x="1362" y="136" width="1" height="1" fill="#777"/><rect x="1370" y="136" width="1" height="1" fill="#777"/><rect x="1377" y="136" width="1" height="1" fill="#777"/><rect x="1385" y="135" width="1" height="3" fill="#666"/><rect x="1392" y="136" width="1" height="1" fill="#777"/><rect x="1400" y="136" width="1" height="1" fill="#777"/><rect x="1407" y="136" width="1" height="1" fill="#777"/><rect x="1415" y="136" width="1" height="1" fill="#777"/><rect x="1423" y="130" width="1" height="1" fill="#777"/><rect x="1423" y="143" width="1" height="1" fill="#777"/><rect x="1430" y="136" width="1" height="1" fill="#777"/><rect x="1438" y="136" width="1" height="1" fill="#777"/><rect x="1445" y="136" width="1" height="1" fill="#777"/><rect x="1453" y="136" width="1" height="1" fill="#777"/><rect x="1460" y="135" width="1" height="3" fill="#666"/><rect x="1468" y="136" width="1" height="1" fill="#777"/><rect x="1476" y="136" width="1" height="1" fill="#777"/><rect x="1483" y="136" width="1" height="1" fill="#777"/><rect x="1491" y="136" width="1" height="1" fill="#777"/><rect x="1498" y="130" width="1" height="1" fill="#777"/><rect x="1498" y="143" width="1" height="1" fill="#777"/><rect x="1506" y="136" width="1" height="1" fill="#777"/><rect x="1513" y="136" width="1" height="1" fill="#777"/><rect x="1521" y="136" width="1" height="1" fill="#777"/><rect x="1528" y="136" width="1" height="1" fill="#777"/><rect x="1536" y="135" width="1" height="3" fill="#666"/><rect x="1544" y="136" width="1" height="1" fill="#777"/><rect x="1551" y="136" width="1" height="1" fill="#777"/><rect x="1559" y="136" width="1" height="1" fill="#777"/><rect x="1566" y="136" width="1" height="1" fill="#777"/><rect x="1574" y="130" width="1" height="1" fill="#777"/><rect x="1574" y="143" width="1" height="1" fill="#777"/><path d="M305.5 144.5H311.5M308.5 144.5V140" stroke="#222" stroke-width="1" fill="none"/><path d="M399.5 144.5H405.5M402.5 144.5V140" stroke="#222" stroke-width="1" fill="none"/><path d="M493.5 144.5H499.5M496.5 144.5V140" stroke="#222" stroke-width="1" fill="none"/><path d="M588.5 144.5H594.5M591.5 144.5V140" stroke="#222" stroke-width="1" fill="none"/><path d="M683.5 144.5H689.5M686.5 144.5V140" stroke="#222" stroke-width="1" fill="none"/><path d="M777.5 144.5H783.5M780.5 144.5V140" stroke="#222" stroke-width="1" fill="none"/><path d="M871.5 144.5H877.5M874.5 144.5V140" stroke="#222" stroke-width="1" fill="none"/><path d="M966.5 144.5H972.5M969.5 144.5V140" stroke="#222" stroke-width="1" fill="none"/><path d="M1061.5 144.5H1067.5M1064.5 144.5V140" stroke="#222" stroke-width="1" fill="none"/><path d="M1155.5 144.5H1161.5M1158.5 144.5V140" stroke="#222" stroke-width="1" fill="none"/><path d="M1249.5 144.5H1255.5M1252.5 144.5V140" stroke="#222" stroke-width="1" fill="none"/><path d="M1344.5 144.5H1350.5M1347.5 144.5V140" stroke="#222" stroke-width="1" fill="none"/><path d="M1439.5 144.5H1445.5M1442.5 144.5V140" stroke="#222" stroke-width="1" fill="none"/><path d="M208.5 144.5V141.5L213 137.5L217.5 141.5V144.5Z" fill="#fff" stroke="#222"/><path d="M247.5 130.5H256.5V132.5L252 136.5L247.5 132.5Z" fill="#fff" stroke="#444"/><path d="M1493.5 144.5V141.5L1498 137.5L1502.5 141.5V144.5Z" fill="#fff" stroke="#222"/><path d="M8 137V142H14" stroke="#111" stroke-width="2" fill="none"/></svg>
<!-- page -->
<div class="a" style="left:58px;top:150px;width:4px;height:947px;background:#a9aaa6"></div>
<div class="a" style="left:62px;top:150px;width:1525px;height:947px;background:#f9faf8;overflow:hidden">
<div class="a" style="left:151px;top:0;width:1px;height:947px;background:#8f908c"></div>
<div class="a" style="left:1436px;top:0;width:1px;height:947px;background:#8f908c"></div>
</div>
<div class="a" style="left:4px;top:150px;width:15px;height:947px;background:#f9faf8"></div>
<svg class="a" style="left:0;top:150px" width="24" height="947"><rect x="10" y="4" width="1" height="1" fill="#888"/><rect x="10" y="11" width="1" height="1" fill="#888"/><rect x="10" y="19" width="1" height="1" fill="#888"/><rect x="9" y="27" width="3" height="1" fill="#555"/><rect x="10" y="34" width="1" height="1" fill="#888"/><rect x="10" y="42" width="1" height="1" fill="#888"/><rect x="10" y="49" width="1" height="1" fill="#888"/><rect x="10" y="57" width="1" height="1" fill="#888"/><text x="0" y="0" transform="translate(8 64.6) rotate(90)" font-family="Liberation Sans" font-size="9" fill="#333" text-anchor="middle">1</text><rect x="10" y="72" width="1" height="1" fill="#888"/><rect x="10" y="80" width="1" height="1" fill="#888"/><rect x="10" y="87" width="1" height="1" fill="#888"/><rect x="10" y="95" width="1" height="1" fill="#888"/><rect x="9" y="103" width="3" height="1" fill="#555"/><rect x="10" y="110" width="1" height="1" fill="#888"/><rect x="10" y="118" width="1" height="1" fill="#888"/><rect x="10" y="125" width="1" height="1" fill="#888"/><rect x="10" y="133" width="1" height="1" fill="#888"/><text x="0" y="0" transform="translate(8 140.6) rotate(90)" font-family="Liberation Sans" font-size="9" fill="#333" text-anchor="middle">2</text><rect x="10" y="148" width="1" height="1" fill="#888"/><rect x="10" y="156" width="1" height="1" fill="#888"/><rect x="10" y="163" width="1" height="1" fill="#888"/><rect x="10" y="171" width="1" height="1" fill="#888"/><rect x="9" y="179" width="3" height="1" fill="#555"/><rect x="10" y="186" width="1" height="1" fill="#888"/><rect x="10" y="194" width="1" height="1" fill="#888"/><rect x="10" y="201" width="1" height="1" fill="#888"/><rect x="10" y="209" width="1" height="1" fill="#888"/><text x="0" y="0" transform="translate(8 216.6) rotate(90)" font-family="Liberation Sans" font-size="9" fill="#333" text-anchor="middle">3</text><rect x="10" y="224" width="1" height="1" fill="#888"/><rect x="10" y="232" width="1" height="1" fill="#888"/><rect x="10" y="239" width="1" height="1" fill="#888"/><rect x="10" y="247" width="1" height="1" fill="#888"/><rect x="9" y="255" width="3" height="1" fill="#555"/><rect x="10" y="262" width="1" height="1" fill="#888"/><rect x="10" y="270" width="1" height="1" fill="#888"/><rect x="10" y="277" width="1" height="1" fill="#888"/><rect x="10" y="285" width="1" height="1" fill="#888"/><text x="0" y="0" transform="translate(8 292.6) rotate(90)" font-family="Liberation Sans" font-size="9" fill="#333" text-anchor="middle">4</text><rect x="10" y="300" width="1" height="1" fill="#888"/><rect x="10" y="308" width="1" height="1" fill="#888"/><rect x="10" y="315" width="1" height="1" fill="#888"/><rect x="10" y="323" width="1" height="1" fill="#888"/><rect x="9" y="331" width="3" height="1" fill="#555"/><rect x="10" y="338" width="1" height="1" fill="#888"/><rect x="10" y="346" width="1" height="1" fill="#888"/><rect x="10" y="353" width="1" height="1" fill="#888"/><rect x="10" y="361" width="1" height="1" fill="#888"/><text x="0" y="0" transform="translate(8 368.6) rotate(90)" font-family="Liberation Sans" font-size="9" fill="#333" text-anchor="middle">5</text><rect x="10" y="376" width="1" height="1" fill="#888"/><rect x="10" y="384" width="1" height="1" fill="#888"/><rect x="10" y="391" width="1" height="1" fill="#888"/><rect x="10" y="399" width="1" height="1" fill="#888"/><rect x="9" y="407" width="3" height="1" fill="#555"/><rect x="10" y="414" width="1" height="1" fill="#888"/><rect x="10" y="422" width="1" height="1" fill="#888"/><rect x="10" y="429" width="1" height="1" fill="#888"/><rect x="10" y="437" width="1" height="1" fill="#888"/><text x="0" y="0" transform="translate(8 444.6) rotate(90)" font-family="Liberation Sans" font-size="9" fill="#333" text-anchor="middle">6</text><rect x="10" y="452" width="1" height="1" fill="#888"/><rect x="10" y="460" width="1" height="1" fill="#888"/><rect x="10" y="467" width="1" height="1" fill="#888"/><rect x="10" y="475" width="1" height="1" fill="#888"/><rect x="9" y="483" width="3" height="1" fill="#555"/><rect x="10" y="490" width="1" height="1" fill="#888"/><rect x="10" y="498" width="1" height="1" fill="#888"/><rect x="10" y="505" width="1" height="1" fill="#888"/><rect x="10" y="513" width="1" height="1" fill="#888"/><text x="0" y="0" transform="translate(8 520.6) rotate(90)" font-family="Liberation Sans" font-size="9" fill="#333" text-anchor="middle">7</text><rect x="10" y="528" width="1" height="1" fill="#888"/><rect x="10" y="536" width="1" height="1" fill="#888"/><rect x="10" y="543" width="1" height="1" fill="#888"/><rect x="10" y="551" width="1" height="1" fill="#888"/><rect x="9" y="559" width="3" height="1" fill="#555"/><rect x="10" y="566" width="1" height="1" fill="#888"/><rect x="10" y="574" width="1" height="1" fill="#888"/><rect x="10" y="581" width="1" height="1" fill="#888"/><rect x="10" y="589" width="1" height="1" fill="#888"/><text x="0" y="0" transform="translate(8 596.6) rotate(90)" font-family="Liberation Sans" font-size="9" fill="#333" text-anchor="middle">8</text><rect x="10" y="604" width="1" height="1" fill="#888"/><rect x="10" y="612" width="1" height="1" fill="#888"/><rect x="10" y="619" width="1" height="1" fill="#888"/><rect x="10" y="627" width="1" height="1" fill="#888"/><rect x="9" y="635" width="3" height="1" fill="#555"/><rect x="10" y="642" width="1" height="1" fill="#888"/><rect x="10" y="650" width="1" height="1" fill="#888"/><rect x="10" y="657" width="1" height="1" fill="#888"/><rect x="10" y="665" width="1" height="1" fill="#888"/><text x="0" y="0" transform="translate(8 672.6) rotate(90)" font-family="Liberation Sans" font-size="9" fill="#333" text-anchor="middle">9</text><rect x="10" y="680" width="1" height="1" fill="#888"/><rect x="10" y="688" width="1" height="1" fill="#888"/><rect x="10" y="695" width="1" height="1" fill="#888"/><rect x="10" y="703" width="1" height="1" fill="#888"/><rect x="9" y="711" width="3" height="1" fill="#555"/><rect x="10" y="718" width="1" height="1" fill="#888"/><rect x="10" y="726" width="1" height="1" fill="#888"/><rect x="10" y="733" width="1" height="1" fill="#888"/><rect x="10" y="741" width="1" height="1" fill="#888"/><text x="0" y="0" transform="translate(8 748.6) rotate(90)" font-family="Liberation Sans" font-size="9" fill="#333" text-anchor="middle">10</text><rect x="10" y="756" width="1" height="1" fill="#888"/><rect x="10" y="764" width="1" height="1" fill="#888"/><rect x="10" y="771" width="1" height="1" fill="#888"/><rect x="10" y="779" width="1" height="1" fill="#888"/><rect x="9" y="787" width="3" height="1" fill="#555"/><rect x="10" y="794" width="1" height="1" fill="#888"/><rect x="10" y="802" width="1" height="1" fill="#888"/><rect x="10" y="809" width="1" height="1" fill="#888"/><rect x="10" y="817" width="1" height="1" fill="#888"/><text x="0" y="0" transform="translate(8 824.6) rotate(90)" font-family="Liberation Sans" font-size="9" fill="#333" text-anchor="middle">11</text><rect x="10" y="832" width="1" height="1" fill="#888"/><rect x="10" y="840" width="1" height="1" fill="#888"/><rect x="10" y="847" width="1" height="1" fill="#888"/><rect x="10" y="855" width="1" height="1" fill="#888"/><rect x="9" y="863" width="3" height="1" fill="#555"/><rect x="10" y="870" width="1" height="1" fill="#888"/><rect x="10" y="878" width="1" height="1" fill="#888"/><rect x="10" y="885" width="1" height="1" fill="#888"/><rect x="10" y="893" width="1" height="1" fill="#888"/><text x="0" y="0" transform="translate(8 900.6) rotate(90)" font-family="Liberation Sans" font-size="9" fill="#333" text-anchor="middle">12</text><rect x="10" y="908" width="1" height="1" fill="#888"/><rect x="10" y="916" width="1" height="1" fill="#888"/><rect x="10" y="923" width="1" height="1" fill="#888"/><rect x="10" y="931" width="1" height="1" fill="#888"/><rect x="9" y="939" width="3" height="1" fill="#555"/></svg>



<div class="a" style="left:1069px;top:296px;width:16px;height:29px;background:#e3e4e0;border:1px solid #9aa77e"></div><div class="ln" style="top:241px;left:252px;width:1246px">Soviel<span class="d"> </span>dazu.<span class="d"> </span>Soviel<span class="d"> </span>dazu.<span class="d"> </span>Soviel<span class="d"> </span>dazu.<span class="d"> </span>Soviel<span class="d"> </span>dazu.<span class="d"> </span>Soviel<span class="d"> </span>dazu.<span class="d"> </span>Soviel<span class="d"> </span>dazu.<span class="d"> </span>Soviel<span class="d"> </span>dazu.<span class="d"> </span>Soviel<span class="d"> </span>dazu.<span class="d"> </span>Soviel<span class="d"> </span>dazu.<span class="d"> </span>So-</div>
<div class="ln" style="top:268px">viel<span class="d"> </span>dazu.<span class="d"> </span>Soviel<span class="d"> </span>dazu.<span class="d"> </span>Soviel<span class="d"> </span>dazu.<span class="d"> </span>Soviel<span class="d"> </span>dazu.<span class="d"> </span>Soviel<span class="d"> </span>dazu.<span class="d"> </span>Soviel<span class="d"> </span>dazu.<span class="d"> </span>Soviel<span class="d"> </span>dazu.<span class="d"> </span>Soviel<span class="d"> </span>dazu.<span class="d"> </span>Soviel<span class="d"> </span>dazu.<span class="d"> </span>Soviel</div>
<div class="ln" style="top:295px;width:983px;letter-spacing:.15px">dazu.<span class="d"> </span>Soviel<span class="d"> </span>dazu.<span class="d"> </span>Soviel<span class="d"> </span>dazu.<span class="d"> </span>Soviel<span class="d"> </span>dazu.<span class="d"> </span>Soviel<span class="d"> </span>dazu.<span class="d"> </span>Soviel<span class="d"> </span>dazu.<span class="d"> </span>Soviel<span class="d"> </span>dazu.<span class="d"> </span>Soviel<span class="d"> </span>dazu.</div>
<div class="a" style="left:1197px;top:296px;width:10px;height:29px;background:#a3a4a0;border:1px solid #8a9a5c"></div>
<div class="t" style="left:1198px;top:298px;font-family:'Liberation Serif',serif;font-size:14px;color:#222">1</div>

<div class="ln" style="top:323px;left:252px;width:1246px">Soviel<span class="d"> </span>dazu.<span class="d"> </span>Soviel<span class="d"> </span>dazu.<span class="d"> </span>Soviel<span class="d"> </span>dazu.<span class="d"> </span>Soviel<span class="d"> </span>dazu.<span class="d"> </span>Soviel<span class="d"> </span>dazu.<span class="d"> </span>Soviel<span class="d"> </span>dazu.<span class="d"> </span>Soviel<span class="d"> </span>dazu.<span class="d"> </span>Soviel<span class="d"> </span>dazu.<span class="d"> </span>Soviel<span class="d"> </span>dazu.<span class="d"> </span>So-</div>
<div class="ln" style="top:350px">viel<span class="d"> </span>dazu.<span class="d"> </span>Soviel<span class="d"> </span>dazu.<span class="d"> </span>Soviel<span class="d"> </span>dazu.<span class="d"> </span>Soviel<span class="d"> </span>dazu.<span class="d"> </span>Soviel<span class="d"> </span>dazu.<span class="d"> </span>Soviel<span class="d"> </span>dazu.<span class="d"> </span>Soviel<span class="d"> </span>dazu.<span class="d"> </span>Soviel<span class="d"> </span>dazu.<span class="d"> </span>Soviel<span class="d"> </span>dazu.<span class="d"> </span>Soviel</div>
<div class="ln" style="top:377px;width:849px;letter-spacing:.15px">dazu.<span class="d"> </span>Soviel<span class="d"> </span>dazu.<span class="d"> </span>Soviel<span class="d"> </span>dazu.<span class="d"> </span>Soviel<span class="d"> </span>dazu.<span class="d"> </span>Soviel<span class="d"> </span>dazu.<span class="d"> </span>Soviel<span class="d"> </span>dazu.<span class="d"> </span>Soviel<span class="d"> </span>dazu.</div>


<div class="t" style="left:214px;top:444px;font-family:'Liberation Serif',serif;font-size:32px;color:#151515">Times<span class="d"> </span>/<span class="d"> </span>Standard</div>
<div class="a" style="left:430px;top:442px;width:10px;height:36px;background:#a3a4a0"></div>
<div class="t" style="left:431px;top:445px;font-family:'Liberation Serif',serif;font-size:17px;color:#222">2</div>

<div class="a" style="left:1587px;top:125px;width:10px;height:972px;background:linear-gradient(90deg,#dfe0dd 0,#e6e7e4 50%,#cfd0cc 51%,#cfd0cc 100%)"></div><div class="a" style="left:1587px;top:172px;width:10px;height:195px;border-radius:5px;border:1px solid #a3a4a0;background:linear-gradient(90deg,#e2e3e0 0,#e6e7e4 50%,#c6c7c3 51%,#c6c7c3 100%)"></div><div class="a" style="left:1485px;top:1097px;width:102px;height:9px;background:#e3e4e1;border-left:1px solid #999"></div>
<div class="a" style="left:200px;top:150px;width:40px;height:40px;overflow:hidden"><svg class="a" style="left:14.0px;top:-4.4px;overflow:visible" width="15.0" height="30.0"><path d="M8.00 0A8.00 6.00 0 0 0 8.00 12.00Z" fill="#244c92"/><rect x="7.10" y="0" width="1.90" height="30.00" fill="#4a8ad0"/><rect x="11.20" y="0" width="1.90" height="30.00" fill="#4a8ad0"/><rect x="7.10" y="0" width="7.80" height="1.10" fill="#4a8ad0"/></svg></div><svg class="a" style="left:214.0px;top:184.0px;overflow:visible" width="15.0" height="30.0"><path d="M8.00 0A8.00 6.00 0 0 0 8.00 12.00Z" fill="#244c92"/><rect x="7.10" y="0" width="1.90" height="30.00" fill="#4a8ad0"/><rect x="11.20" y="0" width="1.90" height="30.00" fill="#4a8ad0"/><rect x="7.10" y="0" width="7.80" height="1.10" fill="#4a8ad0"/></svg><svg class="a" style="left:253.0px;top:218.8px;overflow:visible" width="9.5" height="19.0"><path d="M5.07 0A5.07 3.80 0 0 0 5.07 7.60Z" fill="#244c92"/><rect x="4.50" y="0" width="1.20" height="19.00" fill="#4a8ad0"/><rect x="7.09" y="0" width="1.20" height="19.00" fill="#4a8ad0"/><rect x="4.50" y="0" width="4.94" height="1.00" fill="#4a8ad0"/></svg><svg class="a" style="left:1208.0px;top:298.8px;overflow:visible" width="6.2" height="12.5"><path d="M3.33 0A3.33 2.50 0 0 0 3.33 5.00Z" fill="#244c92"/><rect x="2.96" y="0" width="0.79" height="12.50" fill="#4a8ad0"/><rect x="4.67" y="0" width="0.79" height="12.50" fill="#4a8ad0"/><rect x="2.96" y="0" width="3.25" height="1.00" fill="#4a8ad0"/></svg><svg class="a" style="left:1066.0px;top:384.0px;overflow:visible" width="9.0" height="18.0"><path d="M4.80 0A4.80 3.60 0 0 0 4.80 7.20Z" fill="#244c92"/><rect x="4.26" y="0" width="1.14" height="18.00" fill="#4a8ad0"/><rect x="6.72" y="0" width="1.14" height="18.00" fill="#4a8ad0"/><rect x="4.26" y="0" width="4.68" height="1.00" fill="#4a8ad0"/></svg><svg class="a" style="left:214.0px;top:413.0px;overflow:visible" width="14.5" height="29.0"><path d="M7.73 0A7.73 5.80 0 0 0 7.73 11.60Z" fill="#244c92"/><rect x="6.86" y="0" width="1.84" height="29.00" fill="#4a8ad0"/><rect x="10.83" y="0" width="1.84" height="29.00" fill="#4a8ad0"/><rect x="6.86" y="0" width="7.54" height="1.06" fill="#4a8ad0"/></svg><svg class="a" style="left:441.0px;top:449.0px;overflow:visible" width="14.5" height="29.0"><path d="M7.73 0A7.73 5.80 0 0 0 7.73 11.60Z" fill="#244c92"/><rect x="6.86" y="0" width="1.84" height="29.00" fill="#4a8ad0"/><rect x="10.83" y="0" width="1.84" height="29.00" fill="#4a8ad0"/><rect x="6.86" y="0" width="7.54" height="1.06" fill="#4a8ad0"/></svg>
<!-- sidebar -->
<div class="a" style="left:1597px;top:125px;width:1px;height:975px;background:#8f908c"></div>
<svg class="a" style="left:1600px;top:128px" width="320" height="80"><g fill="#555"><rect x="7" y="6" width="2" height="2"/><rect x="7" y="10" width="2" height="2"/><rect x="7" y="14" width="2" height="2"/><rect x="7" y="18" width="2" height="2"/></g><path d="M249.5 10.5l7 7M256.5 10.5l-7 7" stroke="#111" stroke-width="2.2"/><path d="M284 10.5h11M284 14.5h11M284 18.5h11" stroke="#111" stroke-width="2"/></svg>
<div class="t" style="left:1616px;top:135px;font-size:13.5px;font-weight:bold;color:#1e1e1e">Formatvorlagen</div>
<svg class="a" style="left:1600px;top:160px" width="320" height="280"><rect x="18.5" y="10.5" width="25" height="26" rx="2" fill="#aeafab" stroke="#8d8e8a"/><circle cx="30.6" cy="23" r="7.3" fill="#f2f2f0" stroke="#999" stroke-width="1"/><circle cx="56.8" cy="23" r="7.3" fill="#f2f2f0" stroke="#999" stroke-width="1"/><circle cx="82.9" cy="23" r="7.3" fill="#f2f2f0" stroke="#999" stroke-width="1"/><circle cx="108.9" cy="23" r="7.3" fill="#f2f2f0" stroke="#999" stroke-width="1"/><circle cx="135" cy="23" r="7.3" fill="#f2f2f0" stroke="#999" stroke-width="1"/><circle cx="160.8" cy="23" r="7.3" fill="#f2f2f0" stroke="#999" stroke-width="1"/><path d="M26.5 20h8M26.5 23h8M26.5 26h8" stroke="#1f3f9f" stroke-width="1.8"/><text x="52.5" y="27" font-family="Liberation Sans" font-weight="bold" font-size="11" fill="#1f3f9f">a</text><rect x="78.5" y="19.5" width="9" height="7" fill="none" stroke="#555" stroke-width="1.5"/><path d="M105.5 18.5h5l2 2v6h-7z" fill="none" stroke="#555" stroke-width="1.5"/><path d="M131 19h1.5M131 23h1.5M131 27h1.5M134.5 19h5M134.5 23h5M134.5 27h5" stroke="#1f3f9f" stroke-width="1.8"/><rect x="156.5" y="18.5" width="9" height="9" fill="#1f3f9f"/><path d="M157 21.5h8M157 24.5h8M160 19v8" stroke="#fff" stroke-width=".8"/><path d="M191 20l8 -4 5 8-8 5z" fill="#f4f4f4" stroke="#555" stroke-width="1.2"/><path d="M201 21q4 0 3 7" stroke="#3a6ab0" stroke-width="1.5" fill="none"/><text x="216" y="28" font-family="Liberation Sans" font-size="12" fill="#444">¶</text><path d="M223 19h7M223 22h7M223 25h7M223 28h7" stroke="#555" stroke-width="1"/><path d="M241.5 20h10l-5 5z" fill="#111"/><path d="M284 18l14 14" stroke="#777" stroke-width="3"/><circle cx="284" cy="18" r="4" fill="none" stroke="#777" stroke-width="2"/><circle cx="298" cy="32" r="3.5" fill="none" stroke="#777" stroke-width="2"/><rect x="274.5" y="55.5" width="33" height="33" rx="2" fill="#a8a9a5" stroke="#8d8e8a"/><path d="M280 64v20h16z" fill="#8ea050"/><rect x="281" y="62" width="20" height="4" fill="#222"/><rect x="288" y="62" width="5" height="20" fill="#111"/><rect x="281.5" y="108.5" width="20" height="14" rx="1" fill="#e07820" stroke="#a04a10"/><rect x="284" y="111" width="15" height="9" fill="#5a8ac8"/><rect x="284" y="116" width="15" height="4" fill="#f0c050"/><path d="M291 120v-5l-3-2M291 115l3-2" stroke="#333"/><circle cx="291" cy="164" r="9" fill="#eee" stroke="#777" stroke-width="1.5"/><path d="M295 159l-3 6-2-2z" fill="#e03020"/><path d="M287 169l3-6 2 2z" fill="#2050a0"/><path d="M283.5 201.5h12l4 4v15h-16z" fill="#f6f6f4" stroke="#999"/><path d="M282 252q9-8 18 0q-9 8-18 0z" fill="none" stroke="#333" stroke-width="1.5"/><circle cx="291" cy="252" r="2.5" fill="#333"/><path d="M286 262l12-12" stroke="#3a70c0" stroke-width="3"/></svg>
<div class="a" style="left:1612px;top:206px;width:250px;height:835px;background:#f9faf8;border:1px solid #9a9b97"></div>
<div class="a" style="left:1613px;top:208px;width:237px;height:0;border-top:1px dashed #9a9a9a"></div>
<div class="a" style="left:1613px;top:1038px;width:237px;height:0;border-top:1px dashed #9a9a9a"></div>
<div class="a" style="left:1850px;top:207px;width:11px;height:833px;background:#e3e4e1;border-left:1px solid #c4c5c1"></div>
<div class="a" style="left:1851px;top:251px;width:10px;height:751px;background:#c9cac6;border:1px solid #a9aaa6;border-radius:5px"></div>
<div class="a" style="left:1613px;top:207px;width:237px;height:833px;overflow:hidden"><div class="a" style="left:6px;top:0;width:0;height:833px;border-left:1px dashed #9a9a9a"></div><div class="a" style="left:7px;top:4px;width:13px;height:1px;background:#8a8a8a"></div><div class="sty" style="left:28px;top:-2.9px;font-size:16.5px;font-family:'Liberation Serif',serif;">Absender</div><div class="a" style="left:7px;top:38px;width:5px;height:1px;background:#8a8a8a"></div><div class="sty" style="left:28px;top:30.6px;font-size:16.5px;font-family:'Liberation Serif',serif;font-style:italic;">Beschriftung</div><div class="a" style="left:17px;top:34px;width:0;height:0;border-left:4px solid #111;border-top:4px solid transparent;border-bottom:4px solid transparent"></div><div class="a" style="left:7px;top:72px;width:13px;height:1px;background:#8a8a8a"></div><div class="sty" style="left:28px;top:65.1px;font-size:16.5px;font-family:'Liberation Serif',serif;">Empfänger</div><div class="a" style="left:7px;top:105px;width:13px;height:1px;background:#8a8a8a"></div><div class="sty" style="left:28px;top:100.3px;font-size:13.5px;font-family:'Liberation Serif',serif;letter-spacing:.5px;">Endnote</div><div class="a" style="left:7px;top:139px;width:5px;height:1px;background:#8a8a8a"></div><div class="sty" style="left:28px;top:134.3px;font-size:13.5px;font-family:'Liberation Serif',serif;letter-spacing:.5px;">Fußnote</div><div class="a" style="left:16px;top:137px;width:0;height:0;border-top:4px solid #111;border-left:4px solid transparent;border-right:4px solid transparent"></div><div class="a" style="left:19px;top:155px;width:1px;height:18px;background:#8a8a8a"></div><div class="a" style="left:19px;top:173px;width:14px;height:1px;background:#8a8a8a"></div><div class="sty" style="left:41px;top:169.0px;font-size:12.5px;font-family:'Liberation Serif',serif;letter-spacing:.5px;">Fußnote_w</div><div class="a" style="left:7px;top:208px;width:13px;height:1px;background:#8a8a8a"></div><div class="sty" style="left:28px;top:200.6px;font-size:16.5px;font-family:'Liberation Serif',serif;">Grußformel</div><div class="a" style="left:7px;top:239px;width:13px;height:1px;background:#8a8a8a"></div><div class="sty" style="left:28px;top:238.2px;font-size:8px;font-family:'Liberation Serif',serif;">Horizontale Linie</div><div class="a" style="left:7px;top:276px;width:5px;height:1px;background:#8a8a8a"></div><div class="sty" style="left:28px;top:268.6px;font-size:16.5px;font-family:'Liberation Serif',serif;">Kopf- und Fußzeile</div><div class="a" style="left:17px;top:272px;width:0;height:0;border-left:4px solid #111;border-top:4px solid transparent;border-bottom:4px solid transparent"></div><div class="a" style="left:7px;top:310px;width:13px;height:1px;background:#8a8a8a"></div><div class="sty" style="left:28px;top:302.6px;font-size:16.5px;font-family:'Liberation Serif',serif;">Listeninhalt</div><div class="a" style="left:7px;top:343px;width:13px;height:1px;background:#8a8a8a"></div><div class="sty" style="left:28px;top:336.1px;font-size:16.5px;font-family:'Liberation Serif',serif;">Listenkopf</div><div class="a" style="left:7px;top:377px;width:13px;height:1px;background:#8a8a8a"></div><div class="sty" style="left:28px;top:370.5px;font-size:16px;font-family:'Liberation Serif',serif;">Rahmeninhalt</div><div class="a" style="left:7px;top:411px;width:13px;height:1px;background:#8a8a8a"></div><div class="a" style="left:0;top:396px;width:237px;height:33px;background:#8a9a5c;border-top:1px solid #666;border-bottom:1px solid #666"></div><div class="sty" style="left:28px;top:404.5px;font-size:16px;font-family:'Liberation Serif',serif;">Standard</div><div class="a" style="left:7px;top:445px;width:13px;height:1px;background:#8a8a8a"></div><div class="sty" style="left:90px;top:438.5px;font-size:16px;font-family:'Liberation Serif',serif;">nhalt</div><div class="a" style="left:7px;top:479px;width:13px;height:1px;background:#8a8a8a"></div><div class="sty" style="left:98px;top:472.5px;font-size:16px;font-family:'Liberation Serif',serif;">er</div><div class="a" style="left:7px;top:513px;width:13px;height:1px;background:#8a8a8a"></div><div class="sty" style="left:98px;top:506.5px;font-size:16px;font-family:'Liberation Serif',serif;">ung</div><div class="a" style="left:7px;top:547px;width:13px;height:1px;background:#8a8a8a"></div><div class="sty" style="left:98px;top:540.5px;font-size:16px;font-family:'Liberation Serif',serif;">erste Zeile</div><div class="a" style="left:7px;top:582px;width:13px;height:1px;background:#8a8a8a"></div><div class="sty" style="left:90px;top:575.0px;font-size:16px;font-family:'Liberation Serif',serif;">Textkörper</div><div class="a" style="left:7px;top:615px;width:13px;height:1px;background:#8a8a8a"></div><div class="sty" style="left:98px;top:608.5px;font-size:16px;font-family:'Liberation Serif',serif;">berstellung</div><div class="a" style="left:7px;top:649px;width:13px;height:1px;background:#8a8a8a"></div><div class="sty" style="left:98px;top:642.5px;font-size:16px;font-family:'Liberation Serif',serif;">der Einzug</div><div class="a" style="left:7px;top:683px;width:13px;height:1px;background:#8a8a8a"></div><div class="sty" style="left:98px;top:676.5px;font-size:16px;font-family:'Liberation Serif',serif;">alie</div><div class="a" style="left:7px;top:718px;width:13px;height:1px;background:#8a8a8a"></div><div class="sty" style="left:98px;top:708.8px;font-size:19px;font-family:'Liberation Sans',sans-serif;-webkit-text-stroke:.3px #222;">hrift</div><div class="a" style="left:7px;top:751px;width:13px;height:1px;background:#8a8a8a"></div><div class="sty" style="left:98px;top:746.6px;font-size:13px;font-family:'Liberation Serif',serif;">ft</div><div class="a" style="left:7px;top:785px;width:13px;height:1px;background:#8a8a8a"></div><div class="sty" style="left:98px;top:780.6px;font-size:13px;font-family:'Liberation Serif',serif;">s</div><div class="a" style="left:7px;top:817px;width:13px;height:1px;background:#8a8a8a"></div><div class="sty" style="left:98px;top:812.6px;font-size:13px;font-family:'Liberation Mono',monospace;">tierter Text</div></div>
<div class="cb" style="left:1612px;top:1047px"></div><div class="lbl" style="left:1652px;top:1047px;font-size:13.5px">Vorschau anzeigen</div>
<div class="btn" style="left:1612px;top:1070px;width:250px;height:29px;text-align:left;padding-left:10px">Hierarchisch</div>
<div class="a" style="left:1841px;top:1082px;width:0;height:0;border-top:5px solid #111;border-left:5px solid transparent;border-right:5px solid transparent"></div>
<!-- bottom -->
<svg class="a" style="left:10px;top:1115px" width="24" height="24"><path d="M5 4l14 14M19 4L5 18" stroke="#6a6a6a" stroke-width="3.2" stroke-linecap="round"/></svg>
<div class="inp" style="left:37px;top:1111px;width:220px;height:30px;border-radius:3px 0 0 3px"></div>
<div class="btn" style="left:255px;top:1111px;width:31px;height:30px;border-radius:0 3px 3px 0"></div>
<div class="a" style="left:265px;top:1124px;width:0;height:0;border-top:5px solid #111;border-left:5px solid transparent;border-right:5px solid transparent"></div>
<div class="lbl" style="left:42px;top:1119px;color:#888">Suchen</div>
<svg class="a" style="left:290px;top:1112px" width="60" height="28"><path d="M13 4l-3 4h6zM13 22l-3-4h6z" fill="#bbb"/><path d="M40 8l6 6 6-6" stroke="#bbb" stroke-width="2" fill="none"/></svg>
<div class="lbl" style="left:355px;top:1119px;color:#9a9a9a">Alle suchen</div>
<div class="cb" style="left:428px;top:1119px"></div>
<div class="lbl" style="left:447px;top:1119px">Groß- und Kleinschreibung beachten</div>
<div class="a" style="left:680px;top:1112px;width:32px;height:30px;background:#aeafab;border:1px solid #8d8e8a;border-radius:2px"></div>
<svg class="a" style="left:683px;top:1114px" width="26" height="26"><circle cx="11" cy="11" r="6" fill="#e6eef6" stroke="#1f4fa0" stroke-width="2.5"/><path d="M15 15l6 7" stroke="#222" stroke-width="2.5"/><path d="M8 22l11-13" stroke="#e09040" stroke-width="2.5"/></svg>
<div class="a" style="left:0;top:1146px;width:1920px;height:1px;background:#9d9e9a"></div>
<svg class="a" style="left:10px;top:1150px" width="16" height="14"><path d="M2.5 1.5h7v11h-7z" fill="none" stroke="#555"/><path d="M10 5l4 0M12 3v4M10.5 3.5l3 3M13.5 3.5l-3 3" stroke="#c05010" stroke-width="1"/></svg>
<div class="lbl" style="left:39px;top:1150px;font-size:13px;color:#222">Seite 1 von 2</div>
<div class="lbl" style="left:321px;top:1150px;font-size:13px;color:#222">110 Wörter, 705 Zeichen</div>
<div class="lbl" style="left:718px;top:1150px;font-size:13px;color:#222">Standard</div>
<div class="lbl" style="left:1076px;top:1150px;font-size:13px;color:#222">Deutsch (Deutschland)</div>
<div class="lbl" style="left:1878px;top:1150px;font-size:13px;color:#222">200%</div>
<svg class="a" style="left:1378px;top:1150px" width="20" height="14"><rect x="2.5" y="4.5" width="8" height="5" fill="none" stroke="#3a6ab0"/><path d="M13 2h4M15 2v10M13 12h4" stroke="#222" stroke-width="1.2"/></svg>
<svg class="a" style="left:1660px;top:1149px" width="200" height="16"><path d="M5.5 3.5h6l2 2v8h-8z" fill="#f4f4f4" stroke="#555"/><path d="M19.5 3.5h6v10h-6zM26.5 3.5h6v10h-6z" fill="#f4f4f4" stroke="#555"/><path d="M42.5 3.5h7v10h-7zM49.5 3.5h7v10h-7z" fill="#f4f4f4" stroke="#555"/><path d="M78 8.5h7" stroke="#333" stroke-width="1.5"/><path d="M92 8.5h99" stroke="#444"/><path d="M128 4v9M140 4v9" stroke="#333" stroke-width="1.5"/><circle cx="148" cy="8.5" r="4.5" fill="#fff" stroke="#444"/><path d="M193 8.5h8M197 4.5v8" stroke="#333" stroke-width="1.5"/></svg>
<!-- dlg2 -->
<div class="a" style="left:875px;top:557px;width:835px;height:502px;border-radius:5px;background:#888;box-shadow:1px 2px 0 2px rgba(0,0,0,.2),2px 2px 0 5px rgba(0,0,0,.08)"></div>
<div class="dlg" style="left:875px;top:557px;width:835px;height:502px;border-radius:5px 5px 0 0"></div>
<div class="t" style="left:1229px;top:563px;font-size:13px;color:#a3a3a3">Suchen und Ersetzen</div>
<svg class="a" style="left:1686px;top:563px" width="10" height="10"><path d="M1.5 1.5l7 7M8.5 1.5l-7 7" stroke="#aaa" stroke-width="1.8"/></svg>
<div class="lbl" style="left:901px;top:599px;font-weight:bold">Suchen:</div>
<div class="inp" style="left:972px;top:596px;width:689px;height:30px;border-radius:3px 0 0 3px"></div><div class="btn" style="left:1659px;top:596px;width:32px;height:30px;border-radius:0 3px 3px 0"></div><div class="a" style="left:1670.0px;top:609.0px;width:0;height:0;border-top:5px solid #111;border-left:5px solid transparent;border-right:5px solid transparent"></div>
<div class="lbl" style="left:972px;top:633px;">Keine, Nicht durchgestrichen, Microsoft Sans Serif, Nicht unterstrichen, Nicht überstrichen</div>
<div class="cb" style="left:972px;top:658px"></div><div class="lbl" style="left:992px;top:657px;">Groß- und Kleinschreibung beachten</div>
<div class="cb" style="left:1229px;top:658px"></div><div class="lbl" style="left:1248px;top:657px;">Nur ganze Wörter</div>
<div class="lbl" style="left:901px;top:706px;font-weight:bold">Ersetzen:</div>
<div class="inp" style="left:972px;top:703px;width:689px;height:30px;border-radius:3px 0 0 3px"></div><div class="btn" style="left:1659px;top:703px;width:32px;height:30px;border-radius:0 3px 3px 0"></div><div class="a" style="left:1670.0px;top:716.0px;width:0;height:0;border-top:5px solid #111;border-left:5px solid transparent;border-right:5px solid transparent"></div>
<div class="btn" style="left:901px;top:755px;width:147px;height:27px;line-height:25px;">Alle suchen</div>
<div class="btn" style="left:1060px;top:755px;width:146px;height:27px;line-height:25px;">Vorherigen suchen</div>
<div class="btn" style="left:1219px;top:755px;width:146px;height:27px;line-height:25px;">Nächsten suchen</div>
<div class="btn" style="left:1378px;top:755px;width:146px;height:27px;line-height:25px;">Ersetzen</div>
<div class="btn" style="left:1537px;top:755px;width:146px;height:27px;line-height:25px;">Alle ersetzen</div>
<div class="a" style="left:898px;top:803px;width:0;height:0;border-top:6px solid #111;border-left:5px solid transparent;border-right:5px solid transparent"></div>
<div class="lbl" style="left:911px;top:800px;font-weight:bold">Weitere Optionen</div>
<div class="cb" style="left:907px;top:825px;background:transparent;border-color:#b4b5b1"></div><div class="lbl" style="left:927px;top:824px;color:#7c8a98">Nur in Auswahl</div>
<div class="cb" style="left:907px;top:853px"></div><div class="lbl" style="left:927px;top:852px;">Kommentare</div>
<div class="cb" style="left:907px;top:881px"></div><div class="lbl" style="left:927px;top:880px;">Reguläre Ausdrücke</div>
<div class="cb" style="left:907px;top:912px"></div><div class="lbl" style="left:927px;top:911px;">Ähnlichkeitssuche</div>
<div class="cb" style="left:907px;top:943px"></div><div class="lbl" style="left:927px;top:942px;">Diakritisch-sensitiv</div>
<div class="cb" style="left:1308px;top:825px"></div><div class="lbl" style="left:1328px;top:824px;">Rückwärts ersetzen</div>
<div class="cb" style="left:1308px;top:853px"></div><div class="lbl" style="left:1328px;top:852px;">Einschließlich Formatvorlagen</div>
<div class="btn" style="left:1166px;top:905px;width:130px;height:28px;line-height:26px;background:#cbccc8;color:#8a8a8a;border-color:#aaaba7">Ähnlichkeiten...</div>
<div class="btn" style="left:1019px;top:968px;width:113px;height:27px;line-height:25px;">Attribute...</div>
<div class="btn" style="left:1242px;top:968px;width:118px;height:27px;line-height:25px;">Format...</div>
<div class="btn" style="left:1471px;top:968px;width:113px;height:27px;line-height:25px;">Kein Format</div>
<div class="btn" style="left:895px;top:1008px;width:100px;height:32px;line-height:30px;">Hilfe</div>
<div class="btn" style="left:1591px;top:1008px;width:100px;height:32px;line-height:30px;">Schließen</div>
<!-- dlg1 -->
<div class="a" style="left:89px;top:554px;width:782px;height:564px;border-radius:6px;background:#888;box-shadow:3.5px 4.5px 0 3.5px rgba(0,0,0,.12),4px 7px 0 8px rgba(0,0,0,.1),1px 1.5px 0 6.5px rgba(0,0,0,.12),2px 3px 0 12px rgba(0,0,0,.085)"></div>
<div class="dlg" style="left:89px;top:554px;width:782px;height:564px;border-radius:5px 5px 0 0"></div>
<div class="a" style="left:90px;top:555px;width:780px;height:7px;border-radius:5px 5px 0 0;background:#e2e3e0"></div>
<div class="t" style="left:379px;top:561px;font-size:13px;color:#5f6b78">Nach einer Formatierung suchen</div>
<svg class="a" style="left:847px;top:562px" width="10" height="10"><path d="M1.5 1.5l7 7M8.5 1.5l-7 7" stroke="#8a8a8a" stroke-width="1.8"/></svg>
<div class="a" style="left:103px;top:613px;width:755px;height:436px;background:#e6e7e4;border:1px solid #a0a19d"></div>
<div class="tab" style="left:103px;width:77px;background:#e6e7e4;height:27px">Schriftart</div>
<div class="tab" style="left:183px;width:102px">Schrifteffekte</div>
<div class="tab" style="left:288px;width:70px">Position</div>
<div class="tab" style="left:362px;width:155px">Einzüge und Abstände</div>
<div class="tab" style="left:521px;width:95px">Ausrichtung</div>
<div class="tab" style="left:619px;width:76px">Textfluss</div>
<div class="tab" style="left:698px;width:109px">Hervorhebung</div>
<div class="lbl" style="left:109px;top:621px;">Schriftart:</div>
<div class="lbl" style="left:412px;top:621px;">Schriftschnitt:</div>
<div class="lbl" style="left:661px;top:621px;">Größe:</div>
<div class="inp" style="left:109px;top:643px;width:291px;height:29px"></div>
<div class="inp" style="left:412px;top:643px;width:238px;height:29px"></div>
<div class="inp" style="left:661px;top:643px;width:190px;height:29px"></div>
<div class="lbl" style="left:114px;top:649px;">Microsoft Sans Serif<span style="display:inline-block;width:1px;height:15px;background:#222;vertical-align:-3px"></span></div>
<div class="list" style="left:109px;top:675px;width:291px;height:214px"><div style="top:5px">Abyssinica SIL</div><div style="top:27px">Arial</div><div style="top:49px">Arial Black</div><div style="top:71px">Arial Narrow</div><div style="top:93px">Arial Rounded MT Bold</div><div style="top:115px">Arial Unicode MS</div><div style="top:137px">Bahnschrift</div><div style="top:159px">C059</div><div style="top:181px">Caladea</div><div style="top:203px">Calibri</div><div style="left:0;top:210px;width:280px;border-top:1px dashed #9a9a9a;height:0"></div></div>
<div class="a" style="left:389px;top:676px;width:10px;height:212px;background:#e3e4e1;border-left:1px solid #c4c5c1"></div>
<div class="a" style="left:389px;top:678px;width:10px;height:42px;background:#cacbc7;border:1px solid #a3a49f;border-radius:5px"></div>
<div class="list" style="left:412px;top:675px;width:238px;height:214px"><div style="top:5px">Standard</div><div style="top:27px">Kursiv</div><div style="top:49px">Fett</div><div style="top:71px">Fett Kursiv</div><div style="top:93px">Kein Fett</div><div style="top:115px">Kein Kursiv</div></div>
<div class="list" style="left:661px;top:675px;width:190px;height:214px"><div style="top:5px">6 pt</div><div style="top:27px">7 pt</div><div style="top:49px">8 pt</div><div style="top:71px">9 pt</div><div style="top:93px">10 pt</div><div style="top:115px">10,5 pt</div><div style="top:137px">11 pt</div><div style="top:159px">12 pt</div><div style="top:181px">13 pt</div><div style="top:203px">14 pt</div><div style="left:0;top:210px;width:178px;border-top:1px dashed #9a9a9a;height:0"></div></div>
<div class="a" style="left:840px;top:676px;width:10px;height:212px;background:#e3e4e1;border-left:1px solid #c4c5c1"></div>
<div class="a" style="left:840px;top:678px;width:10px;height:60px;background:#cacbc7;border:1px solid #a3a49f;border-radius:5px"></div>
<div class="lbl" style="left:109px;top:903px;">Sprache:</div>
<div class="inp" style="left:172px;top:896px;width:161px;height:29px;border-radius:3px 0 0 3px"></div><div class="btn" style="left:331px;top:896px;width:32px;height:29px;border-radius:0 3px 3px 0"></div><div class="a" style="left:342.0px;top:908.5px;width:0;height:0;border-top:5px solid #111;border-left:5px solid transparent;border-right:5px solid transparent"></div>
<div class="btn" style="left:736px;top:896px;width:115px;height:29px;line-height:27px;">Funktionen...</div>
<div class="lbl" style="left:109px;top:938px;">Diese Schriftart ist nicht installiert. Die am besten passende vorhandene Schriftart wird benutzt.</div>
<div class="a" style="left:121px;top:971px;width:718px;height:72px;background:#f9faf8;border:1px solid #a0a19d"></div>
<div class="lbl" style="left:121px;top:1000px;width:718px;text-align:center">Microsoft Sans Serif</div>
<div class="btn" style="left:108px;top:1069px;width:122px;height:31px;line-height:29px;">Hilfe</div>
<div class="btn" style="left:474px;top:1069px;width:122px;height:31px;line-height:29px;">Zurücksetzen</div>
<div class="btn" style="left:602px;top:1069px;width:122px;height:31px;line-height:29px;">Abbrechen</div>
<div class="btn" style="left:730px;top:1069px;width:122px;height:31px;line-height:29px;border:2px solid #84a05a;line-height:27px">OK</div>
<!-- annot -->
<svg class="a" style="left:0;top:0" width="1920" height="1167" fill="none" stroke="#ff0000" stroke-linecap="round" stroke-linejoin="round"><rect x="369.1" y="557.1" width="220.7" height="25.7" stroke-width="4.3" rx="1"/><rect x="1212.2" y="557.1" width="166.7" height="27.7" stroke-width="4.3" rx="1"/><rect x="899.1" y="754.1" width="150.7" height="27.7" stroke-width="4.3" rx="1"/><rect x="1243.2" y="966.1" width="118.7" height="29.7" stroke-width="4.3" rx="1"/><path d="M245.0 656.3C287.5 655.1 427.5 650.6 500.0 649.0C572.5 647.4 618.3 648.0 680.0 646.8C741.7 645.6 822.8 643.2 870.0 642.0C917.2 640.8 947.5 639.9 963.0 639.5" stroke-width="4.3"/><path d="M946 629.5L963.5 639.5L949 650.5" stroke-width="4.3"/><path d="M1150 652.3L1272 651.8" stroke-width="3.4"/><path d="M1306 587V955" stroke-width="4.3"/><path d="M1295 945L1306 956.5L1317.5 941.5" stroke-width="4.3"/><path d="M1231.5 984.2C1222.5 986.5 1198.8 996.4 1177.5 997.7C1156.2 999.0 1125.9 995.2 1104.0 992.0C1082.1 988.8 1065.2 983.6 1046.0 978.4C1026.8 973.2 1007.7 967.7 988.5 961.0C969.3 954.3 946.1 945.0 930.7 938.0C915.3 931.0 907.0 927.7 896.0 918.7C885.0 909.7 876.6 898.8 865.0 884.0C853.4 869.2 839.3 847.4 826.5 830.0C813.7 812.6 801.5 799.1 788.0 779.8C774.5 760.5 756.5 734.0 745.6 714.0C734.7 694.0 728.2 674.1 722.4 660.0C716.6 645.9 715.5 640.3 711.0 629.4C706.5 618.5 700.6 603.7 695.4 594.7C690.2 585.7 685.5 579.6 680.0 575.4C674.5 571.2 670.7 570.7 662.5 569.7C654.3 568.8 642.1 569.1 631.0 569.7C619.9 570.4 601.8 573.0 596.0 573.6" stroke-width="4.3"/><path d="M613 564L596 573.6L601 589" stroke-width="4.3"/><path d="M963.5 751.0C967.0 744.8 980.5 726.5 984.7 714.0C988.9 701.5 986.6 694.9 988.5 675.7C990.4 656.5 994.1 617.9 996.0 598.6C997.9 579.3 998.8 574.8 1000.0 560.0C1001.2 545.2 1002.3 525.9 1003.0 509.8C1003.7 493.7 1004.8 480.9 1004.3 463.5C1003.8 446.1 999.9 421.9 999.7 405.7C999.5 389.5 1000.1 377.2 1003.0 366.4C1005.9 355.6 1012.0 347.5 1017.0 340.9C1022.0 334.3 1028.2 329.7 1033.0 327.0C1037.8 324.3 1043.8 325.1 1046.0 324.7" stroke-width="4.3"/><path d="M1017 323.5L1046 324.7L1035.5 356" stroke-width="4.3"/><path d="M988.5 751.0C990.4 748.4 996.8 742.9 1000.0 735.5C1003.2 728.1 1005.2 722.9 1007.8 706.5C1010.4 690.1 1012.0 660.1 1015.5 637.0C1019.0 613.9 1024.5 588.9 1029.0 567.7C1033.5 546.5 1037.5 525.2 1042.5 509.8C1047.5 494.4 1051.8 485.4 1058.7 475.0C1065.6 464.6 1074.0 454.2 1084.0 447.3C1094.0 440.4 1103.3 435.1 1118.8 433.5C1134.2 431.9 1157.4 436.3 1176.7 438.0C1196.0 439.7 1215.2 442.3 1234.5 443.9C1253.8 445.4 1275.1 448.3 1292.4 447.3C1309.8 446.3 1326.3 443.4 1338.6 438.0C1350.9 432.6 1360.8 424.2 1366.4 415.0C1372.0 405.8 1373.2 393.3 1372.0 382.5C1370.8 371.7 1367.0 358.5 1359.5 350.0C1352.0 341.5 1340.1 336.6 1327.0 331.6C1313.9 326.6 1297.0 323.1 1280.8 320.0C1264.6 316.9 1238.5 314.2 1230.0 313.0" stroke-width="4.3"/><path d="M1248 305.3L1230 313L1243.7 324.5" stroke-width="4.3"/></svg>
</body></html>
